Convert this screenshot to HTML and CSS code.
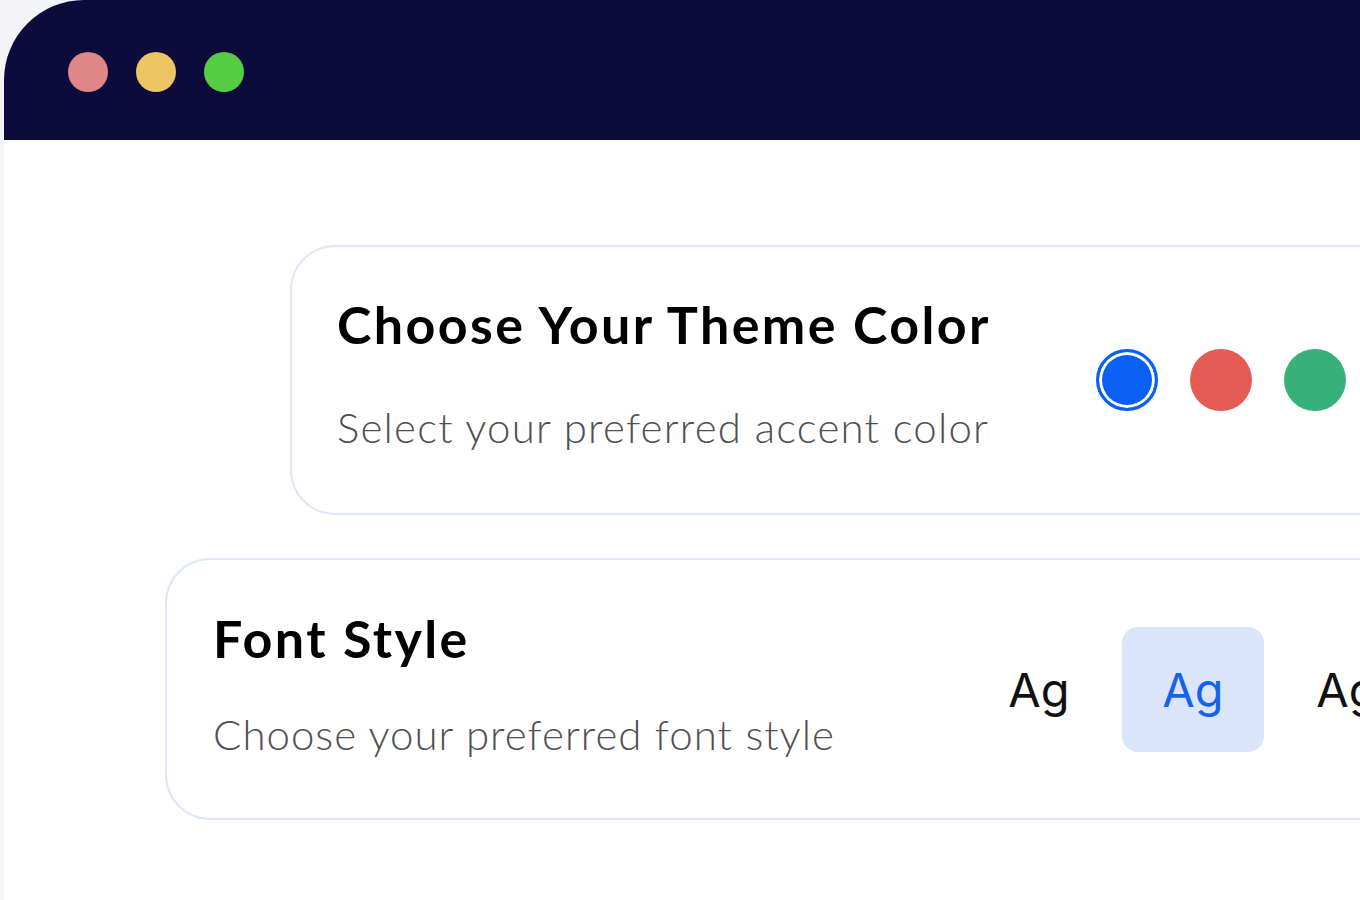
FILE: index.html
```html
<!DOCTYPE html>
<html lang="en">
<head>
<meta charset="utf-8">
<title>Theme settings</title>
<link rel="stylesheet" href="styles.css">
</head>
<body>
<div class="window">
  <header class="titlebar">
    <span class="dot dot-red"></span>
    <span class="dot dot-yellow"></span>
    <span class="dot dot-green"></span>
  </header>
  <main class="content">
    <section class="card card-theme">
      <div class="card-text">
        <h2 class="card-title">Choose Your Theme Color</h2>
        <p class="card-sub">Select your preferred accent color</p>
      </div>
      <div class="swatches">
        <span class="swatch swatch-blue selected"></span>
        <span class="swatch swatch-red"></span>
        <span class="swatch swatch-green"></span>
      </div>
    </section>
    <section class="card card-font">
      <div class="card-text">
        <h2 class="card-title">Font Style</h2>
        <p class="card-sub">Choose your preferred font style</p>
      </div>
      <div class="fonts">
        <span class="font-opt">Ag</span>
        <span class="font-opt active">Ag</span>
        <span class="font-opt">Ag</span>
      </div>
    </section>
  </main>
</div>
</body>
</html>
```

FILE: styles.css
```css
html, body {
  margin: 0;
  padding: 0;
}
body {
  background: #f4f4f6;
  width: 1360px;
  height: 900px;
  overflow: hidden;
  font-family: "Lato", "Noto Sans", sans-serif;
}
.window {
  margin-left: 4px;
  width: 1600px;
  height: 1000px;
  background: #ffffff;
  border-top-left-radius: 80px;
  overflow: hidden;
}
.titlebar {
  height: 140px;
  box-sizing: border-box;
  background: #0d0a3c;
  display: flex;
  align-items: flex-start;
  gap: 28px;
  padding: 52px 0 0 64px;
}
.dot {
  width: 40px;
  height: 40px;
  border-radius: 50%;
  display: block;
}
.dot-red { background: #e08787; }
.dot-yellow { background: #edc663; }
.dot-green { background: #55cc42; }

.content {
  padding-top: 105px;
  display: flex;
  flex-direction: column;
  gap: 43px;
}
.card {
  border: 2px solid #dde6fa;
  border-right: none;
  border-radius: 45px 0 0 45px;
  display: flex;
  align-items: center;
  box-sizing: border-box;
}
.card-theme {
  margin-left: 286px;
  height: 270px;
  padding-left: 45px;
}
.card-font {
  margin-left: 161px;
  height: 262px;
  padding-left: 46px;
}
.card-title {
  margin: 0;
  font-weight: 700;
  font-size: 52px;
  line-height: 60px;
  color: #000;
  letter-spacing: 2.4px;
}
.card-sub {
  margin: 0;
  font-weight: 300;
  font-size: 42px;
  line-height: 50px;
  color: #505050;
  letter-spacing: 1.2px;
}
.card-theme .card-text { padding-bottom: 14px; }
.card-theme .card-sub { margin-top: 48px; }
.card-font .card-text { padding-bottom: 12px; }
.card-font .card-sub { margin-top: 41px; letter-spacing: 1px; }

.swatches {
  display: flex;
  gap: 32px;
  margin-left: 105px;
}
.swatch {
  width: 62px;
  height: 62px;
  border-radius: 50%;
  display: block;
  box-sizing: border-box;
}
.swatch-blue { background: #0a5ff5; }
.swatch-red { background: #e35b52; }
.swatch-green { background: #37b07a; }
.swatch.selected {
  border: 3px solid #0a5ff5;
  box-shadow: inset 0 0 0 3px #ffffff;
}

.fonts {
  display: flex;
  gap: 12px;
  margin-left: 133px;
}
.font-opt {
  width: 142px;
  height: 125px;
  border-radius: 16px;
  display: flex;
  align-items: center;
  justify-content: center;
  font-family: "Inter", "Noto Sans", sans-serif;
  font-size: 47px;
  color: #111;
}
.font-opt.active {
  background: #dae5fb;
  color: #1561ef;
}
```
